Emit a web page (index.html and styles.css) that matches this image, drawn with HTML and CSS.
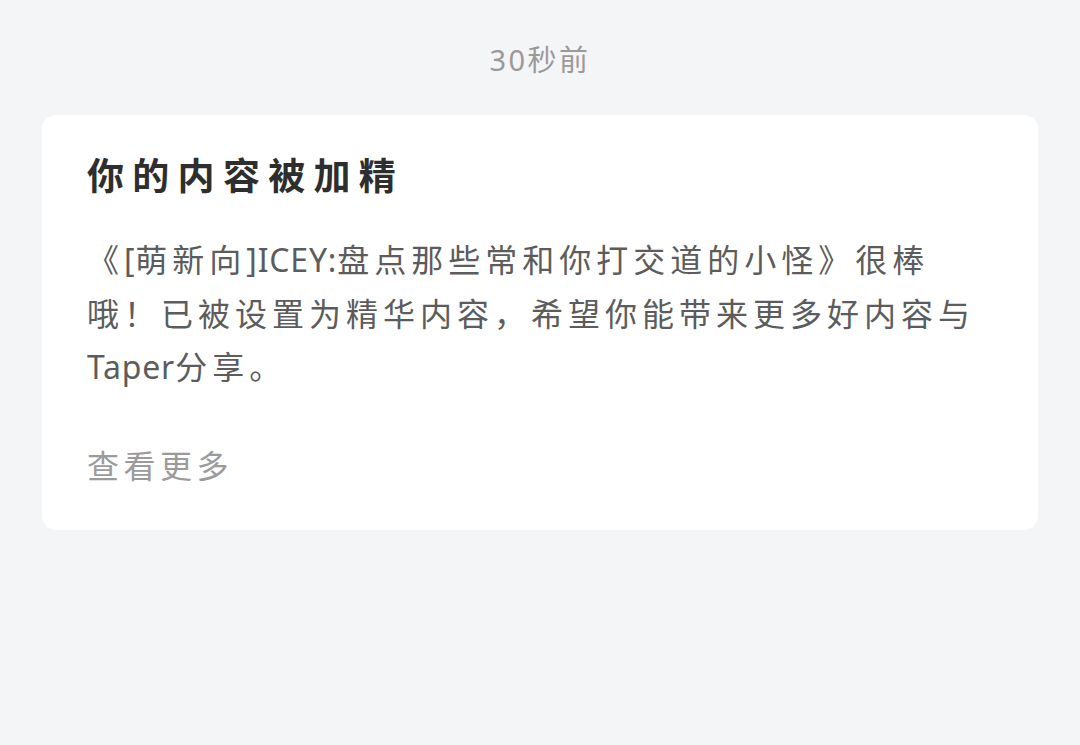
FILE: index.html
```html
<!DOCTYPE html>
<html lang="zh-CN">
<head>
<meta charset="utf-8">
<title>通知</title>
<link rel="stylesheet" href="styles.css">
</head>
<body>
  <div class="time">30秒前</div>
  <div class="card">
    <div class="title">你的内容被加精</div>
    <div class="body">《<span class="latin">[</span>萌新向<span class="latin">]ICEY:</span>盘点那些常和你打交道的小怪》很棒哦！已被设置为精华内容，希望你能带来更多好内容与<span class="latin">Taper</span>分享。</div>
    <div class="more">查看更多</div>
  </div>
</body>
</html>
```
FILE: styles.css
```css
html, body {
  margin: 0;
  padding: 0;
}
body {
  background: #f4f5f7;
  width: 1080px;
  height: 745px;
  font-family: "Noto Sans", "Noto Sans CJK SC", sans-serif;
}
.time {
  padding-top: 40px;
  height: 40px;
  line-height: 40px;
  text-align: center;
  font-size: 29px;
  letter-spacing: 2.5px;
  color: #9a9a9a;
}
.card {
  margin: 35px 42px 0;
  background: #ffffff;
  border-radius: 14px;
  padding: 36px 50px 39px 45px;
}
.title {
  font-size: 37px;
  line-height: 50px;
  font-weight: 700;
  letter-spacing: 8.3px;
  color: #2e2e2e;
}
.body {
  margin-top: 32px;
  font-size: 32px;
  line-height: 53.5px;
  letter-spacing: 5px;
  color: #5c5c5c;
}
.latin {
  letter-spacing: 0.8px;
}
.more {
  margin-top: 47px;
  font-size: 32px;
  line-height: 50px;
  letter-spacing: 4.5px;
  color: #9b9b9b;
}
```
